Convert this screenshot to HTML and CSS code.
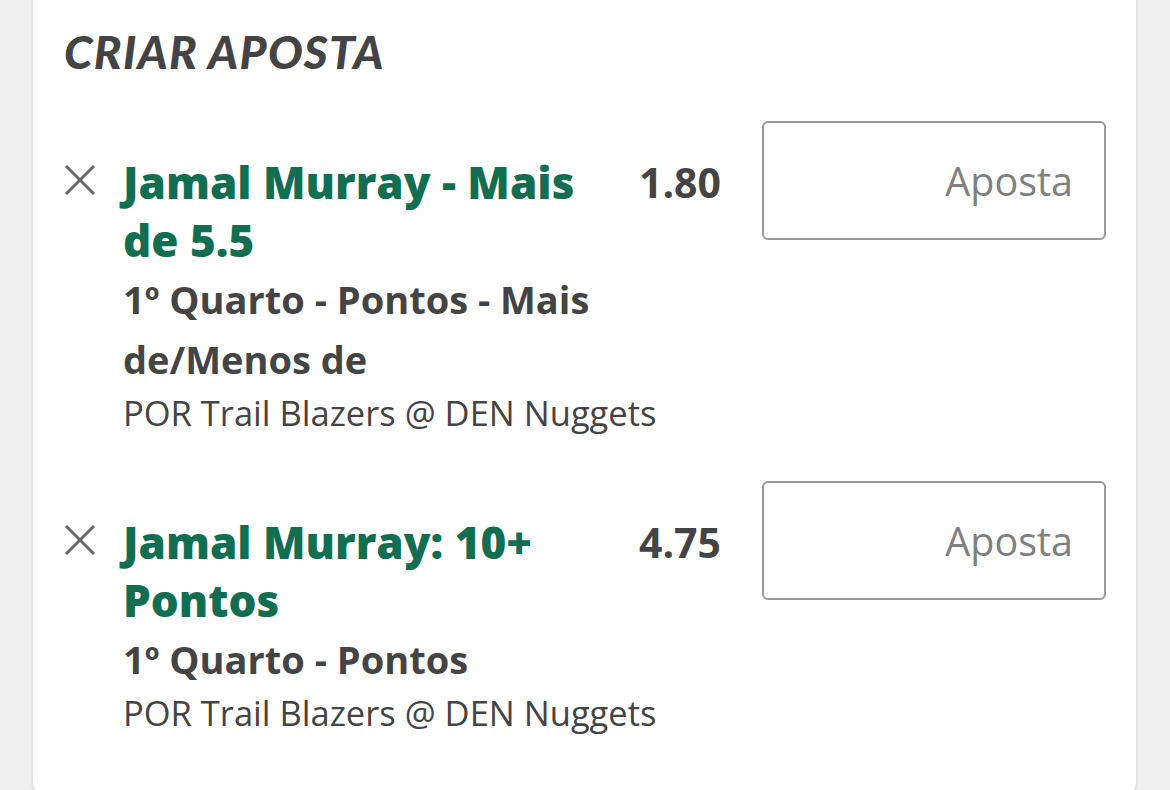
FILE: index.html
```html
<!DOCTYPE html>
<html lang="pt">
<head>
<meta charset="utf-8">
<title>Criar Aposta</title>
<link rel="stylesheet" href="styles.css">
</head>
<body>
<div class="page">
  <section class="card">
    <h1 class="heading">CRIAR APOSTA</h1>

    <div class="bet">
      <button class="remove" aria-label="Remover">
        <svg viewBox="0 0 32 32" width="32" height="32"><path d="M2 2 L30 30 M30 2 L2 30" stroke="#666" stroke-width="3" fill="none"/></svg>
      </button>
      <div class="info">
        <div class="head">
          <div class="selection">Jamal Murray - Mais de 5.5</div>
          <div class="odds">1.80</div>
        </div>
        <div class="market">1º Quarto - Pontos - Mais de/Menos de</div>
        <div class="event">POR Trail Blazers @ DEN Nuggets</div>
      </div>
      <input class="stake" type="text" placeholder="Aposta">
    </div>

    <div class="bet">
      <button class="remove" aria-label="Remover">
        <svg viewBox="0 0 32 32" width="32" height="32"><path d="M2 2 L30 30 M30 2 L2 30" stroke="#666" stroke-width="3" fill="none"/></svg>
      </button>
      <div class="info">
        <div class="head">
          <div class="selection">Jamal Murray: 10+ Pontos</div>
          <div class="odds">4.75</div>
        </div>
        <div class="market">1º Quarto - Pontos</div>
        <div class="event">POR Trail Blazers @ DEN Nuggets</div>
      </div>
      <input class="stake" type="text" placeholder="Aposta">
    </div>
  </section>
</div>
</body>
</html>
```
FILE: styles.css
```css
html, body {
  margin: 0;
  padding: 0;
  background: #efefef;
}
body {
  font-family: "Open Sans", "Noto Sans", sans-serif;
  color: #444;
}
.page {
  padding: 0 32px 0 31px;
}
.card {
  background: #fff;
  border: 2px solid #e4e4e4;
  border-top: none;
  border-radius: 0 0 18px 18px;
  padding: 0 30px 60px 31px;
}
.heading {
  margin: 0;
  padding-top: 28px;
  font-family: Lato, "Liberation Sans", Arial, sans-serif;
  font-style: italic;
  font-weight: 900;
  font-size: 46px;
  line-height: 48px;
  letter-spacing: 1.3px;
  color: #444;
}
.bet {
  display: grid;
  grid-template-columns: 32px 1fr 344px;
  column-gap: 27px;
  align-items: start;
  margin-top: 45px;
}
.bet + .bet {
  margin-top: 44px;
}
.remove {
  margin: 43px 0 0;
  padding: 0;
  border: none;
  background: none;
  width: 32px;
  height: 32px;
  display: block;
}
.remove svg { display: block; }
.info {
  padding-top: 32px;
  min-width: 0;
}
.head {
  display: flex;
  align-items: flex-start;
}
.selection {
  flex: 1;
  color: #126e51;
  font-weight: 800;
  font-size: 44px;
  line-height: 58px;
  padding-right: 40px;
}
.odds {
  font-weight: 700;
  font-size: 41px;
  line-height: 58px;
  color: #444;
  margin-right: 14px;
}
.market {
  font-weight: 700;
  font-size: 38px;
  line-height: 60px;
  color: #444;
}
.event {
  font-weight: 400;
  font-size: 34.5px;
  line-height: 48px;
  color: #444;
  white-space: nowrap;
}
.stake {
  box-sizing: border-box;
  width: 344px;
  height: 119px;
  border: 2px solid #999;
  border-radius: 6px;
  padding: 0 31px 0 12px;
  text-align: right;
  font-family: "Open Sans", "Noto Sans", sans-serif;
  font-size: 39.5px;
  color: #444;
  background: #fff;
}
.stake::placeholder {
  color: #808080;
}
```
